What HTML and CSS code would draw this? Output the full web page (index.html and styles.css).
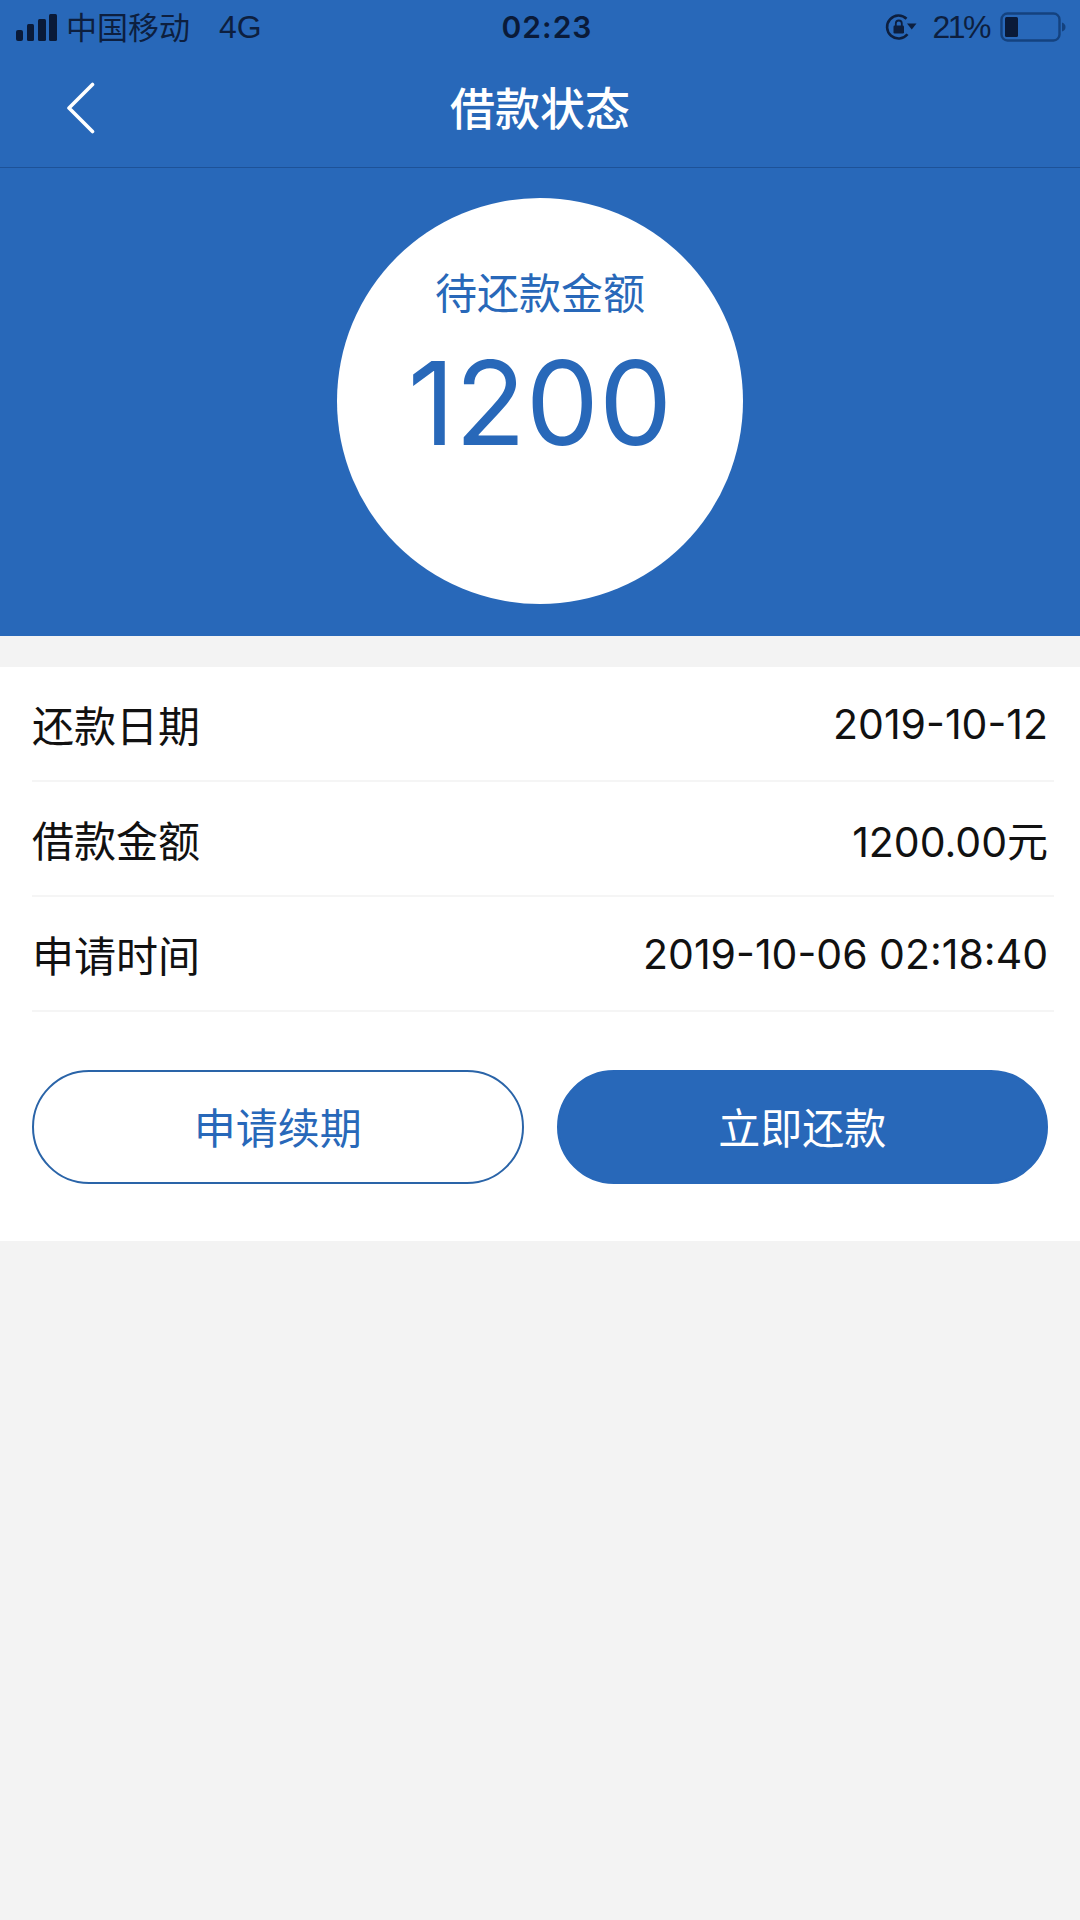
FILE: index.html
```html
<!DOCTYPE html>
<html lang="zh-CN">
<head>
    <meta charset="UTF-8">
    <meta name="viewport" content="width=device-width, initial-scale=1.0">
    <title>借款状态</title>
    <link rel="stylesheet" href="styles.css">
</head>
<body>
    <div class="top">
        <div class="statusbar">
            <div class="status-left">
                <svg class="signal" width="41" height="27" viewBox="0 0 41 27">
                    <rect x="0" y="16" width="7" height="11" rx="2"/>
                    <rect x="11" y="10" width="7" height="17" rx="1.500"/>
                    <rect x="22" y="5" width="8" height="22" rx="1.500"/>
                    <rect x="33" y="0" width="8" height="27" rx="1.500"/>
                </svg>
                <span class="carrier">中国移动</span>
                <span class="net">4G</span>
            </div>
            <div class="clock">02:23</div>
            <div class="status-right">
                <svg class="lock" width="32" height="28" viewBox="0 0 32 28">
                    <path d="M21.500 5.700A11.500 11.500 0 1 0 22.500 21.300" fill="none" stroke="#0d1f3f" stroke-width="2.600"/>
                    <path d="M22 10.500h9.500l-4.750 6z" fill="#0d1f3f"/>
                    <rect x="8.500" y="12.500" width="10.500" height="8" rx="1.200" fill="#0d1f3f"/>
                    <path d="M10.800 13v-2.500a3 3 0 0 1 6 0V13" fill="none" stroke="#0d1f3f" stroke-width="1.800"/>
                </svg>
                <span class="percent">21%</span>
                <svg class="battery" width="66" height="30" viewBox="0 0 66 30">
                    <rect x="1.500" y="1.500" width="58" height="27" rx="6" fill="none" stroke="#14427f" stroke-width="2.400"/>
                    <rect x="5" y="5" width="13" height="20" rx="1.500" fill="#0a1a38"/>
                    <path d="M62 10.500c2.500 1 3.500 2.500 3.500 4.500s-1 3.500-3.500 4.500z" fill="#14427f"/>
                </svg>
            </div>
        </div>
        <div class="navbar">
            <svg class="back" width="30" height="52" viewBox="0 0 30 52">
                <path d="M27.500 2.500L4 26l23.500 23.500" fill="none" stroke="#fff" stroke-width="3.600" stroke-linecap="round" stroke-linejoin="round"/>
            </svg>
            <h1 class="title">借款状态</h1>
        </div>
        <div class="hero">
            <div class="circle">
                <div class="circle-label">待还款金额</div>
                <div class="circle-amount">1200</div>
            </div>
        </div>
    </div>

    <div class="panel">
        <div class="row">
            <span class="row-label">还款日期</span>
            <span class="row-value">2019-10-12</span>
        </div>
        <div class="row">
            <span class="row-label">借款金额</span>
            <span class="row-value">1200.00元</span>
        </div>
        <div class="row">
            <span class="row-label">申请时间</span>
            <span class="row-value">2019-10-06 02:18:40</span>
        </div>
        <div class="actions">
            <button class="btn btn-outline">申请续期</button>
            <button class="btn btn-solid">立即还款</button>
        </div>
    </div>
</body>
</html>
```

FILE: styles.css
```css
* {
    box-sizing: border-box;
}
body {
    margin: 0;
    width: 1080px;
    height: 1920px;
    overflow: hidden;
    background-color: #f3f3f3;
    font-family: "Liberation Sans", "Noto Sans CJK SC", sans-serif;
}
.top {
    background: #2868b9;
    height: 636px;
}
.statusbar {
    height: 54px;
    padding: 0 14px 0 16px;
    position: relative;
    display: flex;
    justify-content: space-between;
    align-items: center;
    color: #0d1f3f;
    font-size: 31px;
}
.status-left {
    display: flex;
    align-items: center;
}
.signal {
    fill: #0a1a38;
    margin-right: 9px;
}
.carrier {
    position: relative;
    top: -2px;
}
.net {
    margin-left: 29px;
    font-size: 32px;
}
.clock {
    position: absolute;
    left: 14px;
    right: 0;
    text-align: center;
    font-family: Inter, sans-serif;
    font-size: 30px;
    font-weight: 600;
    letter-spacing: 1px;
    color: #0a1a38;
}
.status-right {
    display: flex;
    align-items: center;
    gap: 11px;
}
.lock {
    margin-right: 4px;
}
.percent {
    font-size: 32px;
    letter-spacing: -2.500px;
}
.navbar {
    height: 114px;
    display: flex;
    align-items: center;
    justify-content: center;
    position: relative;
    border-bottom: 1px solid #1d5298;
    padding-bottom: 8px;
}
.back {
    position: absolute;
    left: 65px;
    top: 28px;
}
.title {
    margin: 0;
    color: #fff;
    font-size: 45px;
    font-weight: 500;
}
.hero {
    display: flex;
    justify-content: center;
    padding-top: 30px;
}
.circle {
    width: 406px;
    height: 406px;
    border-radius: 50%;
    background: #fff;
    color: #2868b9;
    text-align: center;
    padding-top: 71px;
}
.circle-label {
    font-size: 42px;
    line-height: 52px;
}
.circle-amount {
    font-family: Inter, sans-serif;
    font-size: 116px;
    line-height: 130px;
    margin-top: 17px;
}
.panel {
    margin-top: 31px;
    height: 574px;
    background: #fff;
    padding: 0 26px 0 32px;
}
.row {
    height: 115px;
    display: flex;
    justify-content: space-between;
    align-items: center;
    border-bottom: 2px solid #f5f5f5;
    font-size: 42px;
    color: #111;
}
.row-value {
    font-family: Inter, "Noto Sans CJK SC", sans-serif;
    font-size: 41px;
    padding-right: 6px;
}
.actions {
    display: flex;
    gap: 33px;
    margin-top: 58px;
    padding-right: 6px;
}
.btn {
    flex: 1;
    height: 114px;
    border-radius: 57px;
    font-family: inherit;
    font-size: 42px;
    padding: 0 0 4px;
    border: 2px solid #2a64a8;
}
.btn-outline {
    background: #fff;
    color: #2868b9;
}
.btn-solid {
    background: #2868b9;
    border-color: #2868b9;
    color: #fff;
}
```
